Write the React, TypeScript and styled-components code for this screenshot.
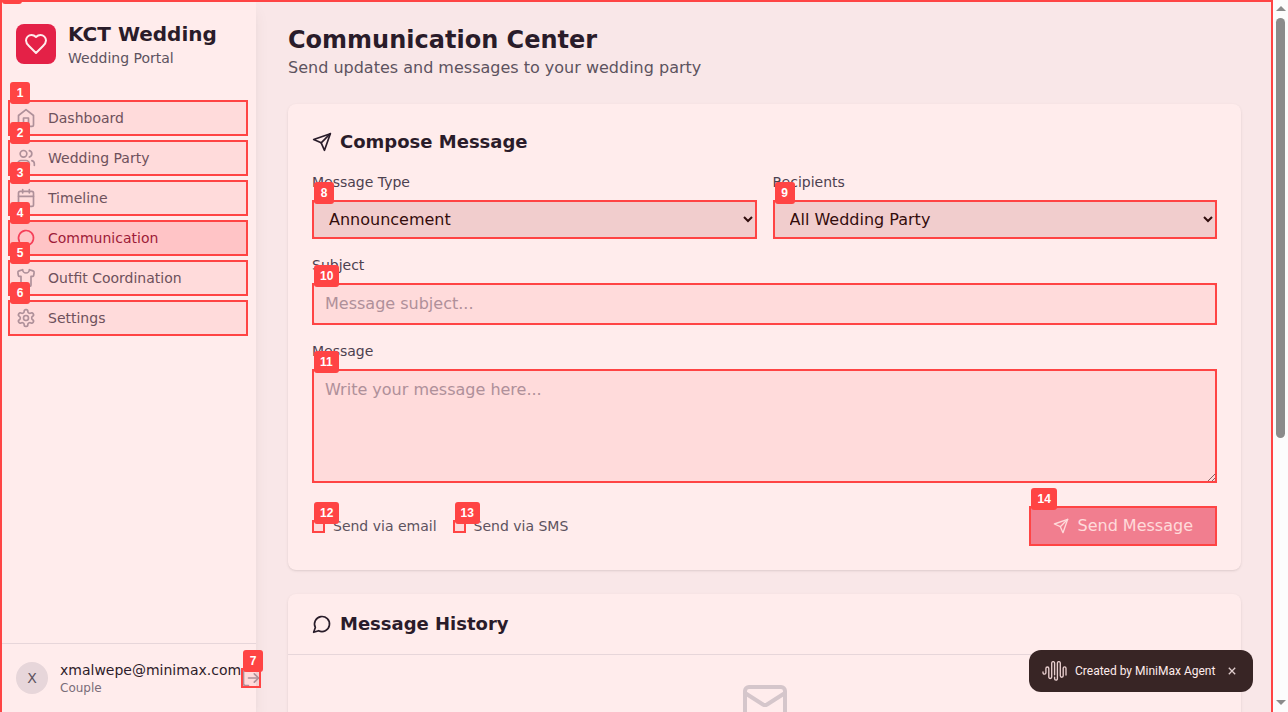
import React, { ReactNode } from "react";
import styled, { createGlobalStyle, css } from "styled-components";
import { Calendar, LogOut, Mail, Shirt, Users } from "lucide-react";

const MARK = "#ff4444";

const GlobalStyle = createGlobalStyle`
  *, *::before, *::after { box-sizing: border-box; }
  html, body { margin: 0; height: 100%; overflow: hidden; }
  body { font-family: "DejaVu Sans", sans-serif; color: #111827; background: #fcfcfc; }
  h1, h2, p { margin: 0; }
  button, input, select, textarea { font-family: inherit; }
`;

const Shell = styled.div`
  display: flex;
  width: 1288px;
  height: 712px;
  overflow: hidden;
`;

const Page = styled.div`
  position: relative;
  display: flex;
  width: 1273px;
  height: 712px;
  overflow: hidden;
  background: #f9fafb;
`;

const PageTint = styled.div`
  position: absolute;
  inset: 0;
  z-index: 10;
  border: 2px solid ${MARK};
  border-bottom: 0;
  background: rgba(255, 68, 68, 0.1);
  background-clip: padding-box;
  pointer-events: none;
`;

const Tag = styled.span`
  position: absolute;
  left: 2px;
  top: -18px;
  z-index: 30;
  min-width: 20px;
  height: 22px;
  padding: 0 6px;
  border-radius: 3px;
  background: ${MARK};
  color: #fff;
  font: bold 12px/22px "Liberation Sans", sans-serif;
  text-align: center;
  pointer-events: none;
`;

const PageTag = styled(Tag)`
  left: 0;
  top: -20px;
`;

const Frame = styled.span`
  position: absolute;
  inset: 0;
  z-index: 20;
  border: 2px solid ${MARK};
  background: rgba(255, 68, 68, 0.1);
  background-clip: padding-box;
  pointer-events: none;
`;

const MarkBox = styled.div`
  position: relative;
  display: flex;
  flex-shrink: 0;
`;

function Marked({ n, children }: { n: number; children: ReactNode }) {
  return (
    <MarkBox>
      {children}
      <Frame />
      <Tag>{n}</Tag>
    </MarkBox>
  );
}

const Sidebar = styled.aside`
  display: flex;
  flex-direction: column;
  flex-shrink: 0;
  width: 256px;
  height: 712px;
  background: #fff;
  box-shadow: 0 10px 15px -3px rgba(0, 0, 0, 0.1), 0 4px 6px -4px rgba(0, 0, 0, 0.1);
`;

const Brand = styled.div`
  display: flex;
  align-items: center;
  gap: 12px;
  padding: 20px 16px 0;
`;

const Logo = styled.div`
  display: flex;
  align-items: center;
  justify-content: center;
  width: 40px;
  height: 40px;
  border-radius: 8px;
  background: #e11d48;
  color: #fff;
`;

const BrandName = styled.h1`
  font-size: 20px;
  line-height: 28px;
  font-weight: 700;
`;

const BrandSub = styled.p`
  font-size: 14px;
  line-height: 20px;
  color: #4b5563;
`;

const Nav = styled.nav`
  display: flex;
  flex-direction: column;
  flex: 1;
  gap: 4px;
  padding: 32px 8px 0;
`;

const NavItem = styled.a<{ $active?: boolean }>`
  display: flex;
  align-items: center;
  gap: 12px;
  width: 100%;
  height: 36px;
  padding: 8px;
  border-radius: 6px;
  font-size: 14px;
  line-height: 20px;
  color: #4b5563;
  svg { color: #9ca3af; }
  ${(p) =>
    p.$active &&
    css`
      background: #ffe4e6;
      color: #881337;
      svg { color: #f43f5e; }
    `}
`;

const Account = styled.div`
  display: flex;
  align-items: center;
  padding: 16px;
  border-top: 1px solid #e5e7eb;
`;

const Avatar = styled.div`
  flex-shrink: 0;
  width: 32px;
  height: 32px;
  margin-right: 12px;
  border-radius: 50%;
  background: #e5e7eb;
  color: #4b5563;
  font-size: 14px;
  line-height: 32px;
  text-align: center;
`;

const Email = styled.p`
  font-size: 14px;
  line-height: 20px;
`;

const Role = styled.p`
  font-size: 12px;
  line-height: 16px;
  color: #6b7280;
`;

const IconButton = styled.button`
  display: flex;
  padding: 0;
  border: 0;
  background: none;
  color: #9ca3af;
`;

const Main = styled.main`
  display: flex;
  flex-direction: column;
  flex: 1;
  gap: 24px;
  padding: 24px 32px 0;
`;

const PageTitle = styled.h1`
  font-size: 24px;
  line-height: 32px;
  font-weight: 700;
`;

const PageSub = styled.p`
  font-size: 16px;
  line-height: 24px;
  color: #4b5563;
`;

const Card = styled.section`
  flex-shrink: 0;
  border-radius: 8px;
  background: #fff;
  box-shadow: 0 1px 3px rgba(0, 0, 0, 0.1), 0 1px 2px -1px rgba(0, 0, 0, 0.1);
`;

const Form = styled.form`
  display: flex;
  flex-direction: column;
  gap: 16px;
  padding: 24px;
`;

const CardTitle = styled.h2`
  display: flex;
  align-items: center;
  gap: 8px;
  font-size: 18px;
  line-height: 28px;
  font-weight: 600;
`;

const Columns = styled.div`
  display: grid;
  grid-template-columns: 1fr 1fr;
  gap: 16px;
`;

const Field = styled.div`
  display: flex;
  flex-direction: column;
  gap: 8px;
`;

const Label = styled.label`
  font-size: 14px;
  line-height: 20px;
  color: #374151;
`;

const fieldBox = css`
  width: 100%;
  margin: 0;
  padding: 8px 12px;
  border: 1px solid #d1d5db;
  border-radius: 6px;
  font-size: 16px;
  line-height: 24px;
  &::placeholder { color: #9ca3af; opacity: 1; }
`;

const Select = styled.select`
  ${fieldBox}
  height: 39px;
  background: #efefef;
  color: #000;
`;

const TextInput = styled.input`
  ${fieldBox}
  height: 42px;
  padding: 7px 12px 9px;
  background: #fff;
`;

const TextArea = styled.textarea`
  ${fieldBox}
  height: 114px;
  background: #fff;
`;

const FormFooter = styled.div`
  display: flex;
  align-items: center;
  justify-content: space-between;
  padding-top: 7px;
`;

const Options = styled.div`
  display: flex;
  gap: 16px;
`;

const Option = styled.div`
  display: flex;
  align-items: center;
  gap: 8px;
  font-size: 14px;
  line-height: 20px;
  color: #4b5563;
`;

const Checkbox = styled.input`
  width: 13px;
  height: 13px;
  margin: 0;
`;

const SendButton = styled.button`
  display: flex;
  align-items: center;
  gap: 8px;
  height: 40px;
  padding: 8px 24px;
  border: 0;
  border-radius: 6px;
  background: #e11d48;
  color: #fff;
  font-size: 16px;
  line-height: 24px;
  opacity: 0.5;
`;

const HistoryHead = styled.div`
  padding: 16px 24px;
  border-bottom: 1px solid #e5e7eb;
`;

const Empty = styled.div`
  display: flex;
  justify-content: center;
  height: 160px;
  padding-top: 24px;
  color: #d1d5db;
`;

const Toast = styled.div`
  position: absolute;
  right: 20px;
  bottom: 20px;
  display: flex;
  align-items: center;
  width: 224px;
  height: 42px;
  padding-left: 13px;
  border-radius: 12px;
  background: #222;
  color: #fff;
  font: 400 12px/16px Roboto, sans-serif;
`;

const ToastText = styled.span`
  width: 140px;
  margin-left: 8px;
  white-space: nowrap;
`;

const Close = styled.svg`
  margin-left: 13px;
`;

const Scrollbar = styled.div`
  display: flex;
  flex-direction: column;
  align-items: center;
  width: 15px;
  height: 712px;
  padding: 6px 0 7px;
  background: #fcfcfc;
`;

const Arrow = styled.i<{ $down?: boolean }>`
  border: solid transparent;
  border-width: ${(p) => (p.$down ? "5px 5px 0" : "0 5px 5px")};
  border-color: ${(p) => (p.$down ? "#8b8b8b transparent transparent" : "transparent transparent #8b8b8b")};
`;

const Thumb = styled.div`
  width: 9px;
  height: 420px;
  margin: 7px 0 auto;
  border-radius: 5px;
  background: #8b8b8b;
`;

type IconProps = { size: number };

function Glyph({ size, children }: IconProps & { children: ReactNode }) {
  return (
    <svg
      width={size}
      height={size}
      viewBox="0 0 24 24"
      fill="none"
      stroke="currentColor"
      strokeWidth="2"
      strokeLinecap="round"
      strokeLinejoin="round"
    >
      {children}
    </svg>
  );
}

const HeartIcon = ({ size }: IconProps) => (
  <Glyph size={size}>
    <path d="M19 14c1.49-1.46 3-3.21 3-5.5A5.5 5.5 0 0 0 16.5 3c-1.76 0-3 .5-4.5 2-1.500-1.500-2.740-2-4.500-2A5.500 5.500 0 0 0 2 8.500c0 2.300 1.500 4.050 3 5.500l7 7Z" />
  </Glyph>
);

const HomeIcon = ({ size }: IconProps) => (
  <Glyph size={size}>
    <path d="m3 9 9-7 9 7v11a2 2 0 0 1-2 2H5a2 2 0 0 1-2-2z" />
    <path d="M9 22V12h6v10" />
  </Glyph>
);

const BubbleIcon = ({ size }: IconProps) => (
  <Glyph size={size}>
    <path d="M7.9 20A9 9 0 1 0 4 16.1L2 22Z" />
  </Glyph>
);

const SendIcon = ({ size }: IconProps) => (
  <Glyph size={size}>
    <path d="m22 2-7 20-4-9-9-4Z" />
    <path d="M22 2 11 13" />
  </Glyph>
);

const GearIcon = ({ size }: IconProps) => (
  <Glyph size={size}>
    <path d="M12.22 2h-.44a2 2 0 0 0-2 2v.18a2 2 0 0 1-1 1.73l-.43.25a2 2 0 0 1-2 0l-.15-.08a2 2 0 0 0-2.73.73l-.22.38a2 2 0 0 0 .73 2.73l.15.1a2 2 0 0 1 1 1.72v.51a2 2 0 0 1-1 1.74l-.15.09a2 2 0 0 0-.73 2.73l.22.38a2 2 0 0 0 2.73.73l.15-.08a2 2 0 0 1 2 0l.43.25a2 2 0 0 1 1 1.73V20a2 2 0 0 0 2 2h.44a2 2 0 0 0 2-2v-.18a2 2 0 0 1 1-1.73l.43-.25a2 2 0 0 1 2 0l.15.08a2 2 0 0 0 2.73-.73l.22-.39a2 2 0 0 0-.73-2.73l-.15-.08a2 2 0 0 1-1-1.74v-.5a2 2 0 0 1 1-1.74l.15-.09a2 2 0 0 0 .73-2.73l-.22-.38a2 2 0 0 0-2.73-.73l-.15.08a2 2 0 0 1-2 0l-.43-.25a2 2 0 0 1-1-1.73V4a2 2 0 0 0-2-2z" />
    <circle cx="12" cy="12" r="3" />
  </Glyph>
);

const links = [
  { label: "Dashboard", Icon: HomeIcon },
  { label: "Wedding Party", Icon: Users },
  { label: "Timeline", Icon: Calendar },
  { label: "Communication", Icon: BubbleIcon, active: true },
  { label: "Outfit Coordination", Icon: Shirt },
  { label: "Settings", Icon: GearIcon },
];

function WaveLogo() {
  return (
    <svg width="25" height="20" viewBox="0 0 25 20" fill="none" stroke="#e6dede" strokeWidth="1.35" strokeLinecap="round">
      <path d="M1 11v.7a1.45 1.45 0 0 0 2.9 0V7.400a1.450 1.450 0 0 1 2.900 0v8.600a1.450 1.450 0 0 0 2.900 0V2.100a1.450 1.450 0 0 1 2.900 0v11.600" />
      <path d="M12.600 16.200v1.500a1.400 1.400 0 0 0 2.800 0V2.100a1.450 1.450 0 0 1 2.900 0v12.700a1.450 1.450 0 0 0 2.900 0V7.300a1.400 1.400 0 0 1 2.800 0v6.700" />
    </svg>
  );
}

export default function App() {
  return (
    <Shell>
      <GlobalStyle />
      <Page>
        <Sidebar>
          <Brand>
            <Logo>
              <HeartIcon size={24} />
            </Logo>
            <div>
              <BrandName>KCT Wedding</BrandName>
              <BrandSub>Wedding Portal</BrandSub>
            </div>
          </Brand>
          <Nav>
            {links.map(({ label, Icon, active }, i) => (
              <Marked key={label} n={i + 1}>
                <NavItem $active={active}>
                  <Icon size={20} />
                  {label}
                </NavItem>
              </Marked>
            ))}
          </Nav>
          <Account>
            <Avatar>X</Avatar>
            <div>
              <Email>xmalwepe@minimax.com</Email>
              <Role>Couple</Role>
            </div>
            <Marked n={7}>
              <IconButton type="button" aria-label="Sign out">
                <LogOut size={20} />
              </IconButton>
            </Marked>
          </Account>
        </Sidebar>
        <Main>
          <header>
            <PageTitle>Communication Center</PageTitle>
            <PageSub>Send updates and messages to your wedding party</PageSub>
          </header>
          <Card>
            <Form>
              <CardTitle>
                <SendIcon size={20} />
                Compose Message
              </CardTitle>
              <Columns>
                <Field>
                  <Label>Message Type</Label>
                  <Marked n={8}>
                    <Select defaultValue="a">
                      <option value="a">Announcement</option>
                    </Select>
                  </Marked>
                </Field>
                <Field>
                  <Label>Recipients</Label>
                  <Marked n={9}>
                    <Select defaultValue="a">
                      <option value="a">All Wedding Party</option>
                    </Select>
                  </Marked>
                </Field>
              </Columns>
              <Field>
                <Label>Subject</Label>
                <Marked n={10}>
                  <TextInput placeholder="Message subject..." />
                </Marked>
              </Field>
              <Field>
                <Label>Message</Label>
                <Marked n={11}>
                  <TextArea placeholder="Write your message here..." />
                </Marked>
              </Field>
              <FormFooter>
                <Options>
                  <Option>
                    <Marked n={12}>
                      <Checkbox type="checkbox" />
                    </Marked>
                    Send via email
                  </Option>
                  <Option>
                    <Marked n={13}>
                      <Checkbox type="checkbox" />
                    </Marked>
                    Send via SMS
                  </Option>
                </Options>
                <Marked n={14}>
                  <SendButton type="button">
                    <SendIcon size={16} />
                    Send Message
                  </SendButton>
                </Marked>
              </FormFooter>
            </Form>
          </Card>
          <Card>
            <HistoryHead>
              <CardTitle>
                <BubbleIcon size={20} />
                Message History
              </CardTitle>
            </HistoryHead>
            <Empty>
              <Mail size={48} />
            </Empty>
          </Card>
        </Main>
        <Toast>
          <WaveLogo />
          <ToastText>Created by MiniMax Agent</ToastText>
          <Close width="8" height="8" viewBox="0 0 8 8" stroke="#ddd" strokeWidth="1.3">
            <path d="M.8.8l6.400 6.400M7.200.8L.8 7.200" />
          </Close>
        </Toast>
        <PageTint>
          <PageTag />
        </PageTint>
      </Page>
      <Scrollbar>
        <Arrow />
        <Thumb />
        <Arrow $down />
      </Scrollbar>
    </Shell>
  );
}
